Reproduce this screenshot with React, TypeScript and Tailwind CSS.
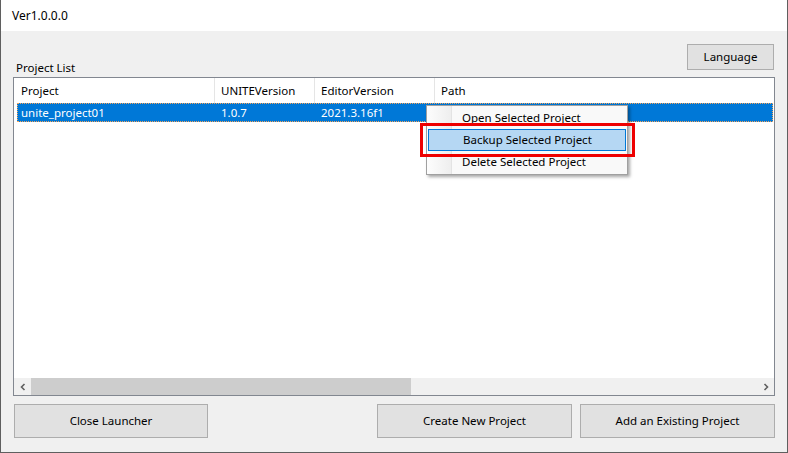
const font = "font-['Segoe_UI','Noto_Sans',sans-serif] text-[11.5px]";

function Btn({ label, w }: { label: string; w: string }) {
  return (
    <div
      className={`${w} h-[34px] flex items-center justify-center border border-[#adadad] bg-[#e1e1e1] text-[#000]`}
    >
      {label}
    </div>
  );
}

function ContextMenu() {
  const items = ["Open Selected Project", "Backup Selected Project", "Delete Selected Project"];
  return (
    <div className="absolute left-[425px] top-[105px] w-[202px] border border-[#a0a0a0] bg-[#f9f9f9] py-[1px] shadow-[2px_2px_3px_rgba(0,0,0,0.35)]">
      <div className="absolute left-0 top-0 bottom-0 w-[25px] bg-gradient-to-r from-[#fdfdfd] to-[#eeeeee] border-r border-[#e3e3e3]" />
      {items.map((it, i) => (
        <div
          key={it}
          className={`relative mx-[1px] h-[22px] flex items-center pl-[34px] ${
            i === 1 ? "bg-[#b5d7f3] border border-[#0078d7] pl-[33px]" : ""
          }`}
        >
          {it}
        </div>
      ))}
    </div>
  );
}

export default function App() {
  return (
    <div className={`relative w-[788px] h-[453px] flex flex-col border-x border-b border-[#5f5f5f] ${font} text-black`}>
      {/* title */}
      <div className="h-[31px] bg-white flex items-center pl-[11px] text-[12px]">Ver1.0.0.0</div>

      <div className="flex-1 bg-[#f0f0f0] pl-[12px] pr-[12px] flex flex-col">
        <div className="h-[46px] flex justify-between">
          <span className="self-end pl-[3px] pb-[1px]">Project List</span>
          <div className="mt-[13px] mr-[1px] w-[87px] h-[26px] flex items-center justify-center border border-[#adadad] bg-[#e1e1e1]">
            Language
          </div>
        </div>

        {/* list view */}
        <div className="h-[319px] border border-[#828790] bg-white flex flex-col">
          <div className="h-[25px] flex">
            <div className="w-[201px] pl-[7px] flex items-center border-r border-[#e5e5e5]">Project</div>
            <div className="w-[100px] pl-[6px] flex items-center border-r border-[#e5e5e5]">UNITEVersion</div>
            <div className="w-[120px] pl-[6px] flex items-center border-r border-[#e5e5e5]">EditorVersion</div>
            <div className="flex-1 pl-[6px] flex items-center">Path</div>
          </div>
          <div className="ml-[3px] mr-[1px] h-[19px] flex bg-[#0078d7] text-white border border-dotted border-[#f5a45a]">
            <div className="w-[197px] pl-[3px] flex items-center">unite_project01</div>
            <div className="w-[100px] pl-[6px] flex items-center">1.0.7</div>
            <div className="w-[120px] pl-[6px] flex items-center">2021.3.16f1</div>
          </div>
          <div className="flex-1" />
          {/* horizontal scrollbar */}
          <div className="h-[17px] flex bg-[#f0f0f0]">
            <div className="w-[17px] flex items-center justify-center text-[#606060]">
              <svg width="8" height="8" viewBox="0 0 8 8">
                <path d="M5.5 1 L2.5 4 L5.5 7" stroke="#606060" strokeWidth="1.6" fill="none" />
              </svg>
            </div>
            <div className="w-[380px] bg-[#cdcdcd]" />
            <div className="flex-1" />
            <div className="w-[17px] flex items-center justify-center">
              <svg width="8" height="8" viewBox="0 0 8 8">
                <path d="M2.5 1 L5.5 4 L2.5 7" stroke="#606060" strokeWidth="1.6" fill="none" />
              </svg>
            </div>
          </div>
        </div>

        {/* buttons */}
        <div className="mt-[8px] pl-[1px] flex gap-[8px]">
          <Btn label="Close Launcher" w="w-[194px]" />
          <div className="flex-1" />
          <Btn label="Create New Project" w="w-[195px]" />
          <Btn label="Add an Existing Project" w="w-[195px]" />
        </div>
      </div>

      <ContextMenu />
      <div className="absolute left-[419px] top-[123px] w-[215px] h-[34px] border-[3px] border-[#ee0000]" />
    </div>
  );
}
